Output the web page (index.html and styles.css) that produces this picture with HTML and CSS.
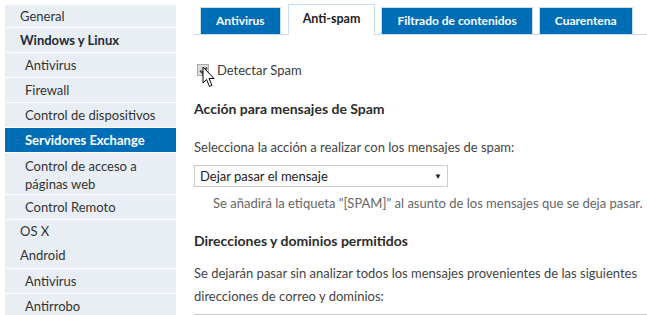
FILE: index.html
```html
<!DOCTYPE html>
<html lang="es">
<head>
    <meta charset="UTF-8">
    <title>Servidores Exchange - Anti-spam</title>
    <link rel="stylesheet" href="styles.css">
</head>
<body>

<div class="layout">
    <ul class="sidebar">
        <li class="group first">General</li>
        <li class="group strong">Windows y Linux</li>
        <li class="sub">Antivirus</li>
        <li class="sub">Firewall</li>
        <li class="sub">Control de dispositivos</li>
        <li class="sub active">Servidores Exchange</li>
        <li class="sub two-lines">Control de acceso a<br>páginas web</li>
        <li class="sub">Control Remoto</li>
        <li class="group plain">OS X</li>
        <li class="group">Android</li>
        <li class="sub">Antivirus</li>
        <li class="sub">Antirrobo</li>
    </ul>

    <div class="main">
        <div class="tabs">
            <div class="tab">Antivirus</div>
            <div class="tab current">Anti-spam</div>
            <div class="tab">Filtrado de contenidos</div>
            <div class="tab">Cuarentena</div>
        </div>

        <div class="check-row">
            <span class="checkbox">
                <svg width="9" height="9" viewBox="0 0 9 9"><path d="M1 4.5 L3.5 7 L8 1.5" fill="none" stroke="#555" stroke-width="2"/></svg>
            </span>
            <span>Detectar Spam</span>
            <svg class="cursor" width="14" height="22" viewBox="0 0 14 22">
                <path d="M1 1 L1 17 L4.5 13.5 L7.5 20.5 L10 19.3 L7 12.5 L12 12.5 Z" fill="#fff" stroke="#000" stroke-width="1" stroke-linejoin="round"/>
            </svg>
        </div>

        <h2 class="heading">Acción para mensajes de Spam</h2>
        <p class="text">Selecciona la acción a realizar con los mensajes de spam:</p>
        <div class="select">
            <span>Dejar pasar el mensaje</span>
            <span class="arrow">▼</span>
        </div>
        <p class="hint">Se añadirá la etiqueta "[SPAM]" al asunto de los mensajes que se deja pasar.</p>

        <h2 class="heading second">Direcciones y dominios permitidos</h2>
        <p class="text long">Se dejarán pasar sin analizar todos los mensajes provenientes de las siguientes direcciones de correo y dominios:</p>
        <div class="rule"></div>
    </div>
</div>

</body>
</html>
```

FILE: styles.css
```css
body {
    margin: 0;
    background: #fff;
    font-family: Lato, "Open Sans", sans-serif;
    font-size: 13px;
    color: #3a3a3a;
    overflow: hidden;
}
.layout {
    display: flex;
    align-items: flex-start;
}
.sidebar {
    list-style: none;
    margin: 5px 0 0 5px;
    padding: 0;
    width: 171px;
    flex-shrink: 0;
    background: #e9eef4;
}
.sidebar li {
    padding: 3px 10px 3px 15px;
    line-height: 18px;
    border-top: 1px solid #fff;
    color: #333;
}
.sidebar .first {
    border-top: none;
    padding: 2px 10px 2px 15px;
}
.sidebar .sub {
    padding-left: 20px;
}
.sidebar .two-lines {
    padding-top: 4px;
    padding-bottom: 1px;
}
.sidebar .strong {
    font-weight: bold;
    color: #1e2a3a;
}
.sidebar .plain {
    border-top: 1px solid #fff;
    padding-top: 2px;
    padding-bottom: 2px;
}
.sidebar .plain + .group {
    border-top: none;
    padding-top: 4px;
    padding-bottom: 4px;
}
.sidebar .active {
    background: #006eb7;
    color: #fff;
    font-weight: bold;
}
.main {
    flex: 1;
    min-width: 0;
    padding-left: 18px;
}
.tabs {
    display: flex;
    align-items: flex-end;
    gap: 6px;
    height: 34px;
    padding-left: 6px;
    border-bottom: 1px solid #c9dcec;
}
.tab {
    flex-shrink: 0;
    white-space: nowrap;
    background: #006eb7;
    color: #fff;
    font-size: 12px;
    font-weight: bold;
    height: 26px;
    line-height: 26px;
    padding: 0 15px;
    border: 1px solid #c9dcec;
    border-bottom: none;
}
.tab.current {
    background: #fff;
    color: #222;
    font-size: 12.5px;
    height: 30px;
    line-height: 27px;
    margin: 0 0 -1px 1px;
    padding: 0 14px;
}
.check-row {
    position: relative;
    display: flex;
    align-items: center;
    gap: 8px;
    margin: 28px 0 0 3px;
    height: 14px;
}
.checkbox {
    width: 10px;
    height: 10px;
    border: 1px solid #aaa;
    background: #ddd;
    display: flex;
    align-items: center;
    justify-content: center;
}
.cursor {
    position: absolute;
    left: 5px;
    top: 3px;
}
.heading {
    font-size: 14px;
    font-weight: bold;
    color: #2c2c2c;
    margin: 23px 0 0;
    line-height: 18px;
}
.heading.second {
    margin-top: 20px;
}
.text {
    margin: 18px 0 0;
    line-height: 22px;
    color: #444;
}
.text.long {
    margin-top: 12px;
    line-height: 23px;
}
.select {
    display: flex;
    justify-content: space-between;
    align-items: center;
    width: 242px;
    height: 20px;
    padding: 0 5px;
    margin-top: 7px;
    border: 1px solid #ccc;
    color: #222;
}
.arrow {
    font-size: 8px;
}
.hint {
    margin: 7px 0 0 19px;
    line-height: 18px;
    color: #666;
}
.rule {
    margin-top: 6px;
    border-top: 1px solid #ccc;
}
```
